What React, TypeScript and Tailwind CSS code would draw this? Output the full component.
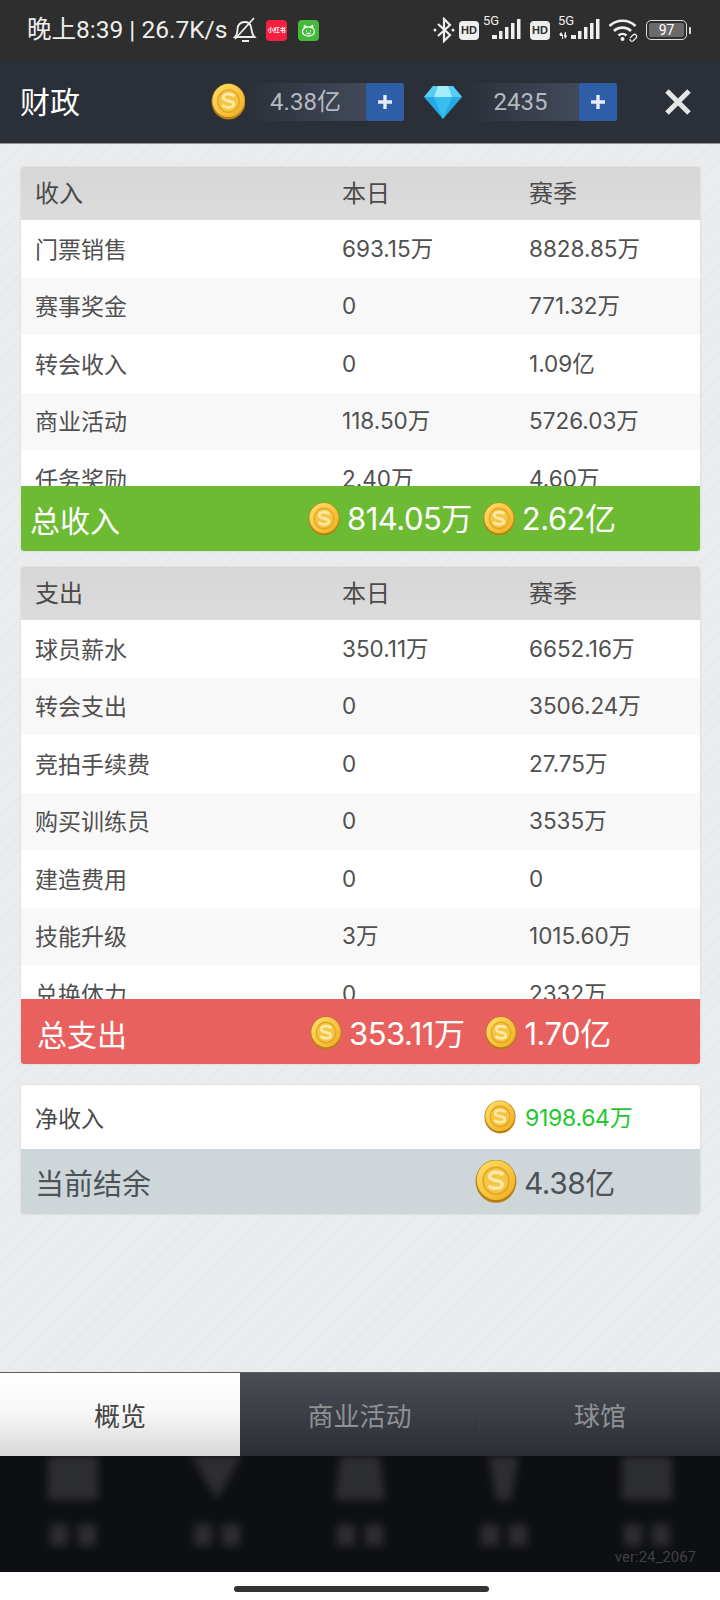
import React from "react";

const font = { fontFamily: '"Noto Sans CJK SC", "Noto Sans", sans-serif' };
const num = { fontFamily: '"Inter", "Noto Sans CJK SC", sans-serif' };

function Coin({ size = 36 }: { size?: number }) {
  const id = `c${size}`;
  return (
    <svg width={size} height={size * 1.06} viewBox="0 0 36 38" className="shrink-0">
      <defs>
        <linearGradient id={id} x1="0" y1="0" x2="1" y2="1">
          <stop offset="0" stopColor="#ffdf6b" />
          <stop offset="1" stopColor="#f0ae1e" />
        </linearGradient>
      </defs>
      <ellipse cx="18" cy="19" rx="17.5" ry="18.5" fill="#b57f14" />
      <ellipse cx="18" cy="18" rx="16.5" ry="17" fill={`url(#${id})`} />
      <ellipse cx="18" cy="18.5" rx="11" ry="11.5" fill="#f6c543" stroke="#e5a526" strokeWidth="1.5" />
      <path d="M24 13.5c-1.5-1.6-3.6-2.2-6-2.2-3.2 0-5.4 1.4-5.4 3.6 0 4.600 10.800 2.400 10.800 6.800 0 2-2.300 3.400-5.400 3.400-2.600 0-4.800-.8-6.200-2.400" fill="none" stroke="#fde9a8" strokeWidth="3" />
    </svg>
  );
}

function Diamond() {
  return (
    <svg width="38" height="34" viewBox="0 0 38 34" className="shrink-0">
      <path d="M9 1h20l9 11-19 22L0 12z" fill="#27a9e6" />
      <path d="M9 1h20l9 11H0z" fill="#58cdf2" />
      <path d="M14 1h10l4 11H10z" fill="#a6ecfb" />
      <path d="M10 12h18l-9 22z" fill="#37c0ef" />
    </svg>
  );
}

function PlusBtn() {
  return (
    <div className="w-[38px] h-[38px] rounded-[2px] bg-[#2f5ea8] flex items-center justify-center shrink-0">
      <svg width="16" height="16" viewBox="0 0 16 16">
        <path d="M8 1v14M1 8h14" stroke="#e6ecf5" strokeWidth="3.4" />
      </svg>
    </div>
  );
}

function Signal({ arrows }: { arrows: boolean }) {
  return (
    <div className={arrows ? "ml-[8px] relative w-[42px] h-[24px]" : "ml-[4px] relative w-[40px] h-[24px]"}>
      <span className="absolute left-0 top-[-4px] text-[13px] leading-none" style={{ fontFamily: '"Roboto", sans-serif' }}>5G</span>
      <svg width="42" height="24" viewBox="0 0 42 24" className="absolute left-0 top-0" fill="#eeeeee">
        {arrows ? <path d="M1 17l2-3 2 3v4H4v-3H2v-1zM7 14h1v4l1-1v1l-2 3-1-3z" /> : null}
        <rect x={arrows ? 13 : 9} y="17" width="5" height="4" />
        <rect x={arrows ? 20 : 16} y="13" width="3.500" height="8" />
        <rect x={arrows ? 26 : 22} y="9" width="3.500" height="12" />
        <rect x={arrows ? 32 : 28} y="5" width="3.500" height="16" />
        <rect x={arrows ? 38 : 34} y="1" width="3.500" height="20" />
      </svg>
    </div>
  );
}

function StatusBar() {
  return (
    <div className="h-[60px] bg-[#2e2e2e] flex items-center pl-[27px] pr-[29px] text-[#eeeeee] shrink-0">
      <span className="text-[24.500px] leading-none whitespace-nowrap" style={{ fontFamily: '"Roboto", "Noto Sans CJK SC", sans-serif' }}>
        晚上8:39 | 26.7K/s
      </span>
      <svg width="24" height="26" viewBox="0 0 24 26" className="ml-[6px]" fill="none" stroke="#eeeeee" strokeWidth="1.8">
        <path d="M2 20c2-2 2.500-4 2.500-8 0-4 3-7 7-7s6 2 6.500 5l1 5c.3 1.800 1 3.500 2.500 5z" />
        <path d="M9 24h7M2 22L21 1" />
      </svg>
      <div className="ml-[9px] w-[21px] h-[21px] rounded-[4px] bg-[#f5203f] flex items-center justify-center text-white text-[6px] font-bold leading-none">
        小红书
      </div>
      <div className="ml-[11px] w-[21px] h-[21px] rounded-[4px] bg-[#46b83c] flex items-center justify-center">
        <svg width="15" height="13" viewBox="0 0 15 13" fill="none" stroke="#e8f8e4" strokeWidth="1.3">
          <ellipse cx="7.500" cy="7.500" rx="6" ry="4.500" />
          <path d="M3 4L3.500 1.500 6 3M12 4l-.5-2.500L9 3" />
          <path d="M5 7h.8M9.200 7h.8M5.500 9.500h4" />
        </svg>
      </div>
      <div className="flex-1" />
      <svg width="22" height="26" viewBox="0 0 22 26" fill="none" stroke="#eeeeee" strokeWidth="2.200" className="mr-[-3px]">
        <path d="M5 7l12 11-6 6V2l6 6L5 19" />
        <circle cx="2" cy="13" r="1.500" fill="#eee" stroke="none" />
        <circle cx="20" cy="13" r="1.500" fill="#eee" stroke="none" />
      </svg>
      <div className="ml-[7px] w-[20px] h-[19px] rounded-[4px] bg-[#eeeeee] text-[#2e2e2e] text-[11px] font-bold flex items-center justify-center leading-none" style={{ fontFamily: '"Liberation Sans", sans-serif' }}>HD</div>
      <Signal arrows={false} />
      <div className="ml-[7px] w-[20px] h-[19px] rounded-[4px] bg-[#eeeeee] text-[#2e2e2e] text-[11px] font-bold flex items-center justify-center leading-none" style={{ fontFamily: '"Liberation Sans", sans-serif' }}>HD</div>
      <Signal arrows />
      <svg width="32" height="24" viewBox="0 0 32 24" className="ml-[8px]" fill="none" stroke="#eeeeee">
        <path d="M1.500 8c7-7 19-7 26 0" strokeWidth="2.600" />
        <path d="M6 13c4.500-4.500 12.500-4.500 17 0" strokeWidth="2.600" />
        <path d="M10.500 17.500c2.300-2 5.700-2 8 0" strokeWidth="2.600" />
        <circle cx="14.500" cy="21" r="2" fill="#eee" stroke="none" />
        <path d="M22 20l3-3a2 2 0 0 1 3 3l-3 3a2 2 0 0 1-3-2" strokeWidth="1.200" />
      </svg>
      <div className="ml-[6px] w-[41px] h-[20px] rounded-[5px] border-[1.500px] border-[#dddddd] p-[2px] flex">
        <div className="w-full bg-[#6a6a6a] rounded-[2px] flex items-center justify-center text-[14px] leading-none text-white" style={{ fontFamily: '"Roboto", sans-serif' }}>97</div>
      </div>
      <div className="ml-[2px] w-[2px] h-[7px] bg-[#dddddd] rounded-r-[1px]" />
    </div>
  );
}

function Header() {
  return (
    <div className="h-[84px] bg-[#2b2f38] flex items-center shrink-0 border-b border-[#8e9094] relative">
      <div className="absolute left-[20px] top-[18px] text-white text-[30px] leading-[44px]" style={font}>财政</div>
      <div className="ml-[211px] flex items-center">
        <Coin size={35} />
        <div className="w-[121px] h-[38px] bg-gradient-to-r from-[#2b2f38] to-[#424a5a] flex items-center justify-center ml-[-1px] text-[#b5b9c0] text-[24px] leading-none">
          <span style={{ fontFamily: '"Roboto", "Noto Sans CJK SC", sans-serif' }}>4.38亿</span>
        </div>
        <PlusBtn />
      </div>
      <div className="ml-[20px] flex items-center">
        <Diamond />
        <div className="w-[117px] h-[38px] bg-gradient-to-r from-[#2b2f38] to-[#424a5a] flex items-center justify-center text-[#b5b9c0] text-[24px] leading-none">
          <span style={{ fontFamily: '"Roboto", "Noto Sans CJK SC", sans-serif' }}>2435</span>
        </div>
        <PlusBtn />
      </div>
      <svg width="28" height="28" viewBox="0 0 28 28" className="ml-[47px]">
        <path d="M3 3l22 22M25 3L3 25" stroke="#e6e6e6" strokeWidth="5" />
      </svg>
    </div>
  );
}

const COLS = "grid grid-cols-[307px_187px_1fr] items-center pl-[14px]";

function Table({ title, rows, height, total, totalBg, totalLabelClass, a, b, gapA, gapB }: {
  title: string; rows: string[][]; height: number; total: string; totalBg: string; totalLabelClass: string; a: string; b: string; gapA: string; gapB: string;
}) {
  return (
    <div className="rounded-[3px] overflow-hidden shadow-[0_0_2px_rgba(0,0,0,0.15)] ml-[21px] mr-[20px] bg-white">
      <div className={`${COLS} h-[53px] bg-gradient-to-b from-[#d6d6d6] to-[#dcdcdc] text-[#4a4a4a] text-[24px] pb-[3px]`}>
        <span>{title}</span>
        <span>本日</span>
        <span>赛季</span>
      </div>
      <div className="overflow-hidden" style={{ height }}>
        {rows.map((r, i) => (
          <div key={r[0]} className={`${COLS} h-[57.500px] text-[#505050] text-[23px] ${i % 2 ? "bg-[#f8f8f8]" : "bg-white"}`}>
            <span className="relative top-[-1px]">{r[0]}</span>
            <span className="text-[22.500px]" style={num}>{r[1]}</span>
            <span className="text-[22.500px]" style={num}>{r[2]}</span>
          </div>
        ))}
      </div>
      <div className={`h-[65px] flex items-center text-white ${totalBg}`}>
        <span className={`text-[30px] leading-none ${totalLabelClass}`}>{total}</span>
        <div className={`flex items-center ${gapA}`}>
          <Coin size={32} />
          <span className="ml-[7px] text-[31px] leading-none tracking-[-0.5px]" style={num}>{a}</span>
        </div>
        <div className={`flex items-center ${gapB}`}>
          <Coin size={32} />
          <span className="ml-[7px] text-[31px] leading-none tracking-[-0.5px]" style={num}>{b}</span>
        </div>
      </div>
    </div>
  );
}

const income = [
  ["门票销售", "693.15万", "8828.85万"],
  ["赛事奖金", "0", "771.32万"],
  ["转会收入", "0", "1.09亿"],
  ["商业活动", "118.50万", "5726.03万"],
  ["任务奖励", "2.40万", "4.60万"],
];
const expense = [
  ["球员薪水", "350.11万", "6652.16万"],
  ["转会支出", "0", "3506.24万"],
  ["竞拍手续费", "0", "27.75万"],
  ["购买训练员", "0", "3535万"],
  ["建造费用", "0", "0"],
  ["技能升级", "3万", "1015.60万"],
  ["兑换体力", "0", "2332万"],
];

const blurShapes = [
  "[clip-path:polygon(0_0,100%_0,100%_100%,0_100%)]",
  "[clip-path:polygon(0_0,100%_0,50%_100%)]",
  "[clip-path:polygon(10%_0,90%_0,100%_100%,0_100%)]",
  "[clip-path:polygon(20%_0,80%_0,65%_100%,35%_100%)]",
  "[clip-path:polygon(0_0,100%_0,100%_100%,0_100%)]",
];

export default function App() {
  return (
    <div className="w-[720px] h-[1600px] flex flex-col overflow-hidden" style={font}>
      <StatusBar />
      <Header />
      <div className="flex-1 flex flex-col pt-[23px] bg-[#e9ebec] bg-[repeating-linear-gradient(135deg,#eaeced_0px,#eaeced_7px,#e7e9ea_7px,#e7e9ea_9px)]">
        <Table title="收入" rows={income} height={266} total="总收入" totalBg="bg-[#6dbb33]" totalLabelClass="ml-[9px]" a="814.05万" b="2.62亿" gapA="ml-[188px]" gapB="ml-[11px]" />
        <div className="h-[16px]" />
        <Table title="支出" rows={expense} height={379} total="总支出" totalBg="bg-[#e8615f] pt-[3px]" totalLabelClass="ml-[16px]" a="353.11万" b="1.70亿" gapA="ml-[183px]" gapB="ml-[21px]" />
        <div className="h-[21px]" />
        <div className="ml-[21px] mr-[20px] rounded-[3px] overflow-hidden shadow-[0_0_2px_rgba(0,0,0,0.15)]">
          <div className="h-[64px] bg-white flex items-center pl-[14px] text-[#4a4a4a] text-[23px]">
            <span className="w-[449px]">净收入</span>
            <Coin size={32} />
            <span className="ml-[9px] text-[#1fc72f] text-[23px] tracking-[-0.3px] relative top-[1px]" style={num}>9198.64万</span>
          </div>
          <div className="h-[65px] bg-[#cfd6da] flex items-center pl-[14px] text-[#4d5257]">
            <span className="w-[440px] text-[29px] leading-none relative top-[1px]">当前结余</span>
            <Coin size={42} />
            <span className="ml-[7px] text-[30px] leading-none tracking-[-0.5px] relative top-[1px]" style={num}>4.38亿</span>
          </div>
        </div>
      </div>
      <div className="h-[84px] flex shrink-0 text-[26px] border-t border-[#5a5d62]">
        <div className="w-[240px] bg-gradient-to-b from-white via-[#f6f6f6] to-[#d8d8d8] flex items-center justify-center text-[#444444]">概览</div>
        <div className="flex-1 flex items-center bg-gradient-to-b from-[#4b4e55] to-[#2b2f35] text-[#8f9194]">
          <div className="w-[240px] h-[28px] flex items-center justify-center border-r border-[#3c3f45]">商业活动</div>
          <div className="flex-1 flex items-center justify-center">球馆</div>
        </div>
      </div>
      <div className="h-[116px] bg-[#0e0f12] shrink-0 relative overflow-hidden">
        <div className="flex justify-between pl-[48px] pr-[48px] opacity-30 blur-[4px]">
          {blurShapes.map((s, i) => (
            <div key={i} className="w-[50px] flex flex-col items-center">
              <div className={`w-[50px] h-[44px] bg-[#777777] ${s}`} />
              <div className="mt-[24px] w-[46px] flex justify-between">
                <div className="w-[18px] h-[22px] bg-[#777777]" />
                <div className="w-[18px] h-[22px] bg-[#777777]" />
              </div>
            </div>
          ))}
        </div>
        <div className="absolute right-[24px] bottom-[7px] text-[15px] leading-none text-[#3f4145]" style={{ fontFamily: '"Roboto", sans-serif' }}>ver:24_2067</div>
      </div>
      <div className="h-[28px] bg-white shrink-0 flex items-center justify-center">
        <div className="w-[255px] h-[6px] rounded-full bg-[#333333] mt-[6px] mr-[-2px]" />
      </div>
    </div>
  );
}
